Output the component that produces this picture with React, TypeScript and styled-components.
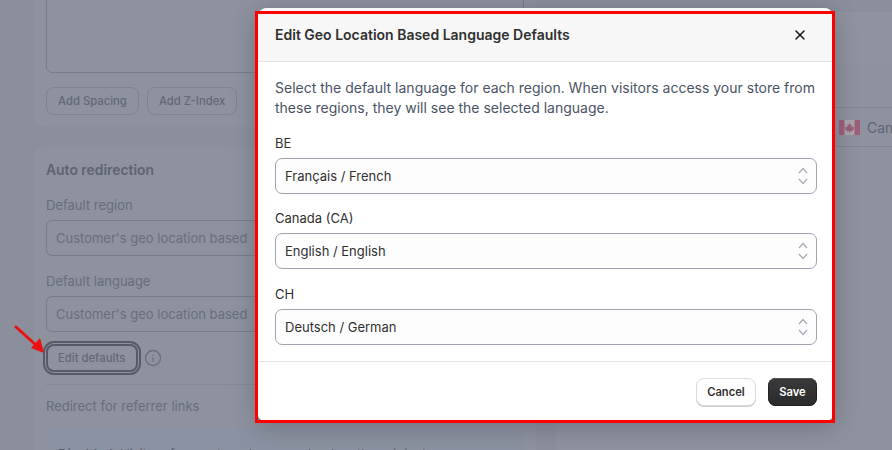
import styled, { createGlobalStyle } from "styled-components";
import { X, Info } from "lucide-react";

const GlobalStyle = createGlobalStyle`
    html, body {
        margin: 0;
        padding: 0;
        height: 100%;
        overflow: hidden;
    }
    body {
        font-family: Inter, "Liberation Sans", sans-serif;
        font-size: 14px;
        -webkit-font-smoothing: antialiased;
    }
`;

const regions = [
    { label: "BE", value: "Français / French" },
    { label: "Canada (CA)", value: "English / English" },
    { label: "CH", value: "Deutsch / German" },
];

const SelectArrows = () => (
    <ArrowsIcon width="12" height="22" viewBox="0 0 12 22" fill="none">
        <path d="M2 8 L6 3.5 L10 8" />
        <path d="M2 14 L6 18.5 L10 14" />
    </ArrowsIcon>
);

const CanadaFlag = () => (
    <FlagIcon width="21" height="15" viewBox="0 0 21 15">
        <rect width="21" height="15" fill="#a8a3ad" />
        <rect width="5.5" height="15" fill="#9c5f79" />
        <rect x="15.5" width="5.5" height="15" fill="#9c5f79" />
        <path
            d="M10.5 3 L11.5 5 L12.6 4.5 L12.2 7 L13.5 6.2 L14 7.3 L15.2 7.2 L14.7 8.7 L15.2 9 L13 10.8 L13.3 11.5 L11 11.2 L10.8 13 L10.2 13 L10 11.2 L7.7 11.5 L8 10.8 L5.8 9 L6.3 8.7 L5.8 7.2 L7 7.3 L7.5 6.2 L8.8 7 L8.4 4.5 L9.5 5 Z"
            fill="#9c5f79"
        />
    </FlagIcon>
);

const App = () => {
    return (
        <Page>
            <GlobalStyle />
            <LeftColumn>
                <TopCard>
                    <FakeTextarea />
                    <ButtonRow>
                        <GhostButton>Add Spacing</GhostButton>
                        <GhostButton>Add Z-Index</GhostButton>
                    </ButtonRow>
                </TopCard>
                <RedirectCard>
                    <CardTitle>Auto redirection</CardTitle>
                    <Field>
                        <FieldLabel>Default region</FieldLabel>
                        <FakeInput>Customer's geo location based</FakeInput>
                    </Field>
                    <Field>
                        <FieldLabel>Default language</FieldLabel>
                        <FakeInput>Customer's geo location based</FakeInput>
                    </Field>
                    <EditRow>
                        <GhostButton $focused>Edit defaults</GhostButton>
                        <Info size={18} color="#696e7c" strokeWidth={1.7} />
                    </EditRow>
                    <Divider />
                    <FieldLabel>Redirect for referrer links</FieldLabel>
                    <Banner>
                        <strong>Disabled:</strong> Visitors from external sources land on the original page.
                    </Banner>
                </RedirectCard>
            </LeftColumn>
            <RightColumn>
                <RightHeader />
                <RightBody>
                    <CountryRow>
                        <CanadaFlag />
                        <span>Canada</span>
                    </CountryRow>
                </RightBody>
            </RightColumn>

            <Modal>
                <ModalHeader>
                    <ModalTitle>Edit Geo Location Based Language Defaults</ModalTitle>
                    <X size={16} color="#111" strokeWidth={2} />
                </ModalHeader>
                <ModalBody>
                    <Description>
                        Select the default language for each region. When visitors access your store from these regions, they will see the selected language.
                    </Description>
                    {regions.map((region) => (
                        <RegionField key={region.label}>
                            <RegionLabel>{region.label}</RegionLabel>
                            <SelectBox>
                                {region.value}
                                <SelectArrows />
                            </SelectBox>
                        </RegionField>
                    ))}
                </ModalBody>
                <ModalFooter>
                    <CancelButton>Cancel</CancelButton>
                    <SaveButton>Save</SaveButton>
                </ModalFooter>
            </Modal>

            <RedFrame />
            <RedArrow width="40" height="40" viewBox="0 0 40 40" fill="none">
                <path d="M2 2 L23 21" stroke="#ee1010" strokeWidth="3" strokeLinecap="round" />
                <path d="M30 28 L17 23 L26 13 Z" fill="#ee1010" />
            </RedArrow>
        </Page>
    );
};

const Page = styled.div`
    position: relative;
    width: 892px;
    height: 450px;
    overflow: hidden;
    background: #8b8f9b;
    display: flex;
    gap: 20px;
    padding-left: 34px;
    box-sizing: border-box;
`;

const LeftColumn = styled.div`
    width: 502px;
    flex-shrink: 0;
    display: flex;
    flex-direction: column;
    gap: 20px;
`;

const Card = styled.div`
    background: #8e929e;
    border-radius: 10px;
    padding: 12px;
    box-sizing: border-box;
`;

const TopCard = styled(Card)`
    margin-top: -30px;
    height: 157px;
    flex-shrink: 0;
`;

const FakeTextarea = styled.div`
    height: 91px;
    border: 1px solid #787c8b;
    border-radius: 6px;
    box-sizing: border-box;
`;

const ButtonRow = styled.div`
    display: flex;
    gap: 8px;
    margin-top: 14px;
`;

const GhostButton = styled.div<{ $focused?: boolean }>`
    height: 28px;
    padding: ${(props) => (props.$focused ? "0 11px 0 10px" : "0 11px")};
    display: flex;
    align-items: center;
    box-sizing: border-box;
    border: ${(props) => (props.$focused ? "2px solid #575b68" : "1px solid #7f8391")};
    border-radius: 8px;
    font-size: 11.3px;
    font-weight: 500;
    color: #636876;
    box-shadow: ${(props) => (props.$focused ? "0 0 0 1px #8e929e, 0 0 0 3px #575b68" : "none")};
`;

const RedirectCard = styled(Card)`
    flex: 1;
    padding-top: 14px;
`;

const CardTitle = styled.div`
    font-size: 13.9px;
    font-weight: 600;
    line-height: 18px;
    color: #5e6371;
`;

const Field = styled.div`
    margin-top: 18px;
    & + & {
        margin-top: 17px;
    }
`;

const FieldLabel = styled.div`
    font-size: 13px;
    line-height: 17px;
    color: #686d7b;
`;

const FakeInput = styled.div`
    height: 36px;
    margin-top: 6px;
    padding: 0 9px;
    display: flex;
    align-items: center;
    box-sizing: border-box;
    border: 1px solid #787c8b;
    border-radius: 6px;
    font-size: 13px;
    color: #696e7c;
`;

const EditRow = styled.div`
    display: flex;
    align-items: center;
    gap: 6px;
    margin-top: 12px;
`;

const Divider = styled.div`
    height: 1px;
    background: #858996;
    margin: 12px 0 13px;
`;

const Banner = styled.div`
    margin-top: 14px;
    padding: 17px 12px;
    border-radius: 6px;
    background: #8a91a0;
    font-size: 13px;
    color: #5e6371;
    white-space: nowrap;
    overflow: hidden;
    strong {
        font-weight: 600;
    }
`;

const RightColumn = styled.div`
    flex: 1;
    margin-top: 12px;
    background: #8e929e;
    border-radius: 10px 0 0 0;
`;

const RightHeader = styled.div`
    height: 50px;
    background: #8f93a0;
    box-sizing: border-box;
`;

const RightBody = styled.div`
    padding-top: 45px;
`;

const CountryRow = styled.div`
    height: 38px;
    display: flex;
    align-items: center;
    gap: 7px;
    padding-left: 283px;
    border-top: 1px solid #808491;
    border-bottom: 1px solid #808491;
    font-size: 14px;
    color: #5e6371;
    white-space: nowrap;
`;

const FlagIcon = styled.svg`
    flex-shrink: 0;
`;

const Modal = styled.div`
    position: absolute;
    left: 257px;
    top: 8px;
    width: 577px;
    height: 414px;
    background: #fff;
    border-radius: 10px;
    box-shadow: 0 4px 24px rgba(20, 24, 36, 0.28);
    display: flex;
    flex-direction: column;
    overflow: hidden;
`;

const ModalHeader = styled.div`
    height: 53px;
    padding: 0 26px 0 18px;
    flex-shrink: 0;
    display: flex;
    align-items: center;
    justify-content: space-between;
    box-sizing: content-box;
    background: #f7f7f7;
    border-bottom: 1px solid #e4e4e6;
`;

const ModalTitle = styled.div`
    font-size: 14px;
    font-weight: 560;
    color: #303030;
`;

const ModalBody = styled.div`
    flex: 1;
    padding: 16px 17px 0 18px;
    border-bottom: 1px solid #e4e4e6;
`;

const Description = styled.p`
    margin: 0;
    font-size: 14px;
    line-height: 20px;
    color: #4a5365;
`;

const RegionField = styled.div`
    margin-top: 16.25px;
    &:first-of-type {
        margin-top: 17px;
    }
`;

const RegionLabel = styled.div`
    font-size: 13px;
    line-height: 17px;
    color: #303030;
`;

const SelectBox = styled.div`
    height: 36px;
    margin-top: 6px;
    padding: 0 7px 0 9px;
    display: flex;
    align-items: center;
    justify-content: space-between;
    box-sizing: border-box;
    border: 1px solid #a0a3b0;
    border-radius: 7px;
    background: #fdfdfd;
    font-size: 13px;
    color: #303030;
`;

const ArrowsIcon = styled.svg`
    stroke: #a4a8b5;
    stroke-width: 1.2;
`;

const ModalFooter = styled.div`
    height: 60px;
    flex-shrink: 0;
    padding-right: 17px;
    display: flex;
    align-items: center;
    justify-content: flex-end;
    gap: 12px;
`;

const FooterButton = styled.div`
    height: 28px;
    display: flex;
    align-items: center;
    justify-content: center;
    box-sizing: border-box;
    border-radius: 8px;
    font-size: 11.2px;
    font-weight: 600;
`;

const CancelButton = styled(FooterButton)`
    width: 60px;
    background: #fff;
    border: 1px solid #dcdcdf;
    box-shadow: 0 1px 0 #cfcfd2;
    color: #303030;
`;

const SaveButton = styled(FooterButton)`
    width: 49px;
    background: linear-gradient(#3a3a3a, #2a2a2a);
    box-shadow: inset 0 1px 0 #555, 0 0 0 1px #222 inset;
    color: #fff;
`;

const RedFrame = styled.div`
    position: absolute;
    left: 255px;
    top: 11px;
    width: 580px;
    height: 412px;
    box-sizing: border-box;
    border: 3px solid #fe0000;
    pointer-events: none;
`;

const RedArrow = styled.svg`
    position: absolute;
    left: 14px;
    top: 325px;
`;

export default App;
